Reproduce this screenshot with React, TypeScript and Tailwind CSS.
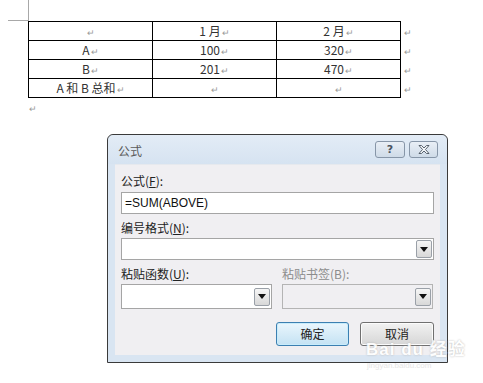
import React from 'react';

const font = { fontFamily: '"Noto Sans CJK SC", "Noto Sans", sans-serif' };

function Mark() {
  return <span className="text-[9px] text-[#9a9a9a] ml-[1px] align-middle">↵</span>;
}

function DropButton() {
  return (
    <div className="w-[16px] h-[18px] mr-[1px] border border-[#9aa0a8] rounded-[2px] bg-gradient-to-b from-[#f6f6f6] to-[#d8d8d8] flex items-center justify-center">
      <svg width="8" height="5" viewBox="0 0 8 5">
        <path d="M0 0 L8 0 L4 5 Z" fill="#111" />
      </svg>
    </div>
  );
}

const rows = [
  ['', '1 月', '2 月'],
  ['A', '100', '320'],
  ['B', '201', '470'],
  ['A 和 B 总和', '', ''],
];

export default function App() {
  return (
    <div className="relative w-[483px] h-[383px] bg-white overflow-hidden" style={font}>
      {/* corner crop marks */}
      <div className="absolute left-[28px] top-0 w-px h-[21px] bg-[#a8a8a8]" />
      <div className="absolute left-[8px] top-[20px] w-[20px] h-px bg-[#a8a8a8]" />

      {/* document table */}
      <div className="pt-[21px] pl-[28px]">
        <table className="border-collapse text-[12px] text-[#333] leading-none">
          <tbody>
            {rows.map((r, i) => (
              <tr key={i} className="h-[19px]">
                {r.map((c, j) => (
                  <td key={j} className="border border-black w-[124px] text-center p-0">
                    {c}
                    <Mark />
                  </td>
                ))}
                <td className="pl-[2px] p-0">
                  <Mark />
                </td>
              </tr>
            ))}
          </tbody>
        </table>
        <div className="h-[16px] leading-[16px]">
          <Mark />
        </div>
      </div>

      {/* formula dialog */}
      <div className="absolute left-[107px] top-[134px] w-[341px] h-[229px] border border-[#3a3a3a] rounded-t-[6px] bg-[#d9e5f2] flex flex-col">
        <div className="h-[29px] flex items-center justify-between pl-[10px] pr-[9px] bg-gradient-to-b from-[#e3ecf6] to-[#d6e3f1] rounded-t-[6px]">
          <span className="text-[12px] text-[#5a5a5a] mt-[2px]">公式</span>
          <div className="flex gap-[4px] mt-[-1px]">
            <div className="w-[30px] h-[17px] border border-[#8796a8] rounded-[3px] bg-gradient-to-b from-[#e9eff6] to-[#cfdbe8] flex items-center justify-center">
              <span className="text-[11px] leading-none text-[#4a5360] font-bold" style={{ fontFamily: '"DejaVu Sans", sans-serif' }}>?</span>
            </div>
            <div className="w-[29px] h-[17px] border border-[#8796a8] rounded-[3px] bg-gradient-to-b from-[#e9eff6] to-[#cfdbe8] flex items-center justify-center">
              <svg width="12" height="9" viewBox="0 0 12 9">
                <path d="M1 0.5 L3.5 0.5 L6 3 L8.5 0.5 L11 0.5 L7.5 4.5 L11 8.5 L8.5 8.5 L6 6 L3.5 8.5 L1 8.5 L4.5 4.5 Z" fill="#f4f7fa" stroke="#4a5360" strokeWidth="0.9" />
              </svg>
            </div>
          </div>
        </div>

        <div className="mx-[7px] mb-[7px] flex-1 bg-[#f0eff2] border-t border-[#e6e9ee] px-[6px] flex flex-col text-[12px] text-[#222]">
          <div className="mt-[8px] h-[16px] leading-[16px]">
            公式(<span className="underline">F</span>):
          </div>
          <div className="mt-[3px] h-[22px] border border-[#a5a5a5] bg-white flex items-center pl-[3px]">
            <span className="text-[12px] text-[#111]" style={{ fontFamily: '"Liberation Sans", Arial, sans-serif' }}>=SUM(ABOVE)</span>
          </div>
          <div className="mt-[6px] h-[16px] leading-[16px]">
            编号格式(<span className="underline">N</span>):
          </div>
          <div className="mt-[2px] h-[22px] border border-[#a5a5a5] bg-white flex items-center justify-end">
            <DropButton />
          </div>

          <div className="mt-[6px] flex gap-[10px]">
            <div className="w-[151px] flex flex-col">
              <div className="h-[16px] leading-[16px]">
                粘贴函数(<span className="underline">U</span>):
              </div>
              <div className="mt-[2px] h-[25px] border border-[#a5a5a5] bg-white flex items-center justify-end">
                <DropButton />
              </div>
            </div>
            <div className="w-[151px] flex flex-col">
              <div className="h-[16px] leading-[16px] text-[#8c8c8c]">粘贴书签(B):</div>
              <div className="mt-[2px] h-[25px] border border-[#b4b4b4] bg-[#f0eff2] flex items-center justify-end">
                <DropButton />
              </div>
            </div>
          </div>

          <div className="mt-[13px] flex justify-end gap-[11px]">
            <div className="w-[73px] h-[24px] border border-[#3c7fb1] rounded-[3px] bg-gradient-to-b from-[#eaf6fd] to-[#c4e2f3] shadow-[inset_0_0_0_1px_#c8ecfb] flex items-center justify-center">
              确定
            </div>
            <div className="w-[74px] h-[24px] border border-[#707070] rounded-[3px] bg-gradient-to-b from-[#f2f2f2] to-[#d6d6d6] shadow-[inset_0_0_0_1px_#fcfcfc] flex items-center justify-center">
              取消
            </div>
          </div>
        </div>
      </div>

      {/* watermark */}
      <div className="absolute left-[366px] top-[341px] text-white text-[17px] font-bold leading-none tracking-[1px] [text-shadow:0_0_2px_#b0b0b0] opacity-90" style={{ fontFamily: '"Liberation Sans", "Noto Sans CJK SC", sans-serif' }}>
        Bai du 经验
      </div>
      <div className="absolute left-[367px] top-[362px] text-[#e6e6e6] text-[8px] leading-none" style={{ fontFamily: '"Liberation Sans", sans-serif' }}>
        jingyan.baidu.com
      </div>
    </div>
  );
}
